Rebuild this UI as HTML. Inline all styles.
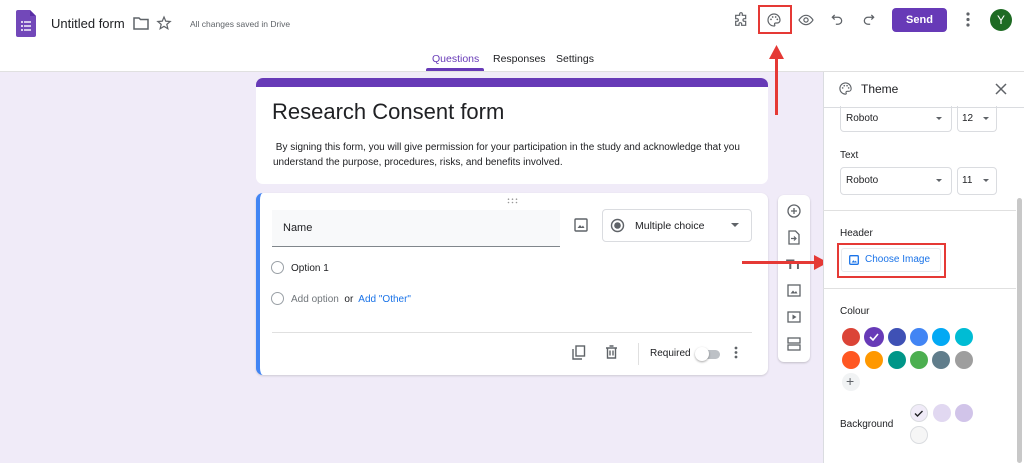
<!DOCTYPE html>
<html><head><meta charset="utf-8"><style>
*{box-sizing:border-box;margin:0;padding:0}
body{width:1024px;height:463px;overflow:hidden;background:#f0ebf8;font-family:"Liberation Sans",sans-serif;color:#202124;position:relative}
.a{position:absolute}
svg{display:block}
.t{font-size:11px}
.dot{position:absolute;width:18px;height:18px;border-radius:50%}
</style></head><body>
<div class="a" style="left:0;top:0;width:1024px;height:72px;background:#fff;border-bottom:1px solid #e0e0e0"></div>
<svg class="a" style="left:16px;top:10px" width="20" height="27" viewBox="0 0 20 27"><path d="M2 0h12l6 6v19a2 2 0 0 1-2 2H2a2 2 0 0 1-2-2V2a2 2 0 0 1 2-2z" fill="#7248b9"/><path d="M14 0v6h6z" fill="#5a2ea6"/><g fill="#fff"><circle cx="6" cy="12" r="1"/><circle cx="6" cy="16" r="1"/><circle cx="6" cy="20" r="1"/><rect x="8" y="11.3" width="7" height="1.4"/><rect x="8" y="15.3" width="7" height="1.4"/><rect x="8" y="19.3" width="7" height="1.4"/></g></svg>
<div class="a" style="left:51px;top:16px;font-size:13px;color:#202124">Untitled form</div>
<svg class="a" style="left:133px;top:16px" width="16" height="14" viewBox="0 0 16 14"><path d="M1 2h5l1.5 1.5H15v9.5H1z" fill="none" stroke="#5f6368" stroke-width="1.5"/></svg>
<svg class="a" style="left:156px;top:15px" width="16" height="16" viewBox="0 0 24 24"><path d="M12 3l2.6 6.2 6.7.5-5.1 4.4 1.6 6.5L12 17l-5.8 3.6 1.6-6.5-5.1-4.4 6.7-.5z" fill="none" stroke="#5f6368" stroke-width="1.8"/></svg>
<div class="a" style="left:190px;top:19px;font-size:8.5px;color:#5f6368">All changes saved in Drive</div>
<svg class="a" style="left:733px;top:12px" width="16" height="16" viewBox="0 0 24 24"><path d="M10 3a2 2 0 0 1 4 0v2h5v5h-2a2 2 0 0 0 0 4h2v6h-6v-2a2 2 0 0 0-4 0v2H4v-6h2a2 2 0 0 0 0-4H4V5h6z" fill="none" stroke="#5f6368" stroke-width="1.8"/></svg>
<div class="a" style="left:758px;top:5px;width:34px;height:29px;border:2px solid #e53935"></div>
<svg class="a" style="left:766px;top:12px" width="16" height="16" viewBox="0 0 24 24"><path d="M12 3a9 9 0 0 0 0 18c1.2 0 1.6-1 1-2-.7-1 0-2.5 1.5-2.5H17a4 4 0 0 0 4-4C21 7 17 3 12 3z" fill="none" stroke="#5f6368" stroke-width="1.8"/><circle cx="7.5" cy="11" r="1.3" fill="#5f6368"/><circle cx="10" cy="7.5" r="1.3" fill="#5f6368"/><circle cx="14.5" cy="7.5" r="1.3" fill="#5f6368"/><circle cx="17" cy="11" r="1.3" fill="#5f6368"/></svg>
<svg class="a" style="left:797px;top:12px" width="18" height="16" viewBox="0 0 24 24"><path d="M1.5 12S5.5 5 12 5s10.5 7 10.5 7-4 7-10.5 7S1.5 12 1.5 12z" fill="none" stroke="#5f6368" stroke-width="1.8"/><circle cx="12" cy="12" r="3.2" fill="none" stroke="#5f6368" stroke-width="1.8"/></svg>
<svg class="a" style="left:830px;top:12px" width="14" height="14" viewBox="0 0 24 24"><path d="M8 5L4 9l4 4M4 9h10a6 6 0 0 1 0 12h-4" fill="none" stroke="#5f6368" stroke-width="2.2"/></svg>
<svg class="a" style="left:862px;top:12px" width="14" height="14" viewBox="0 0 24 24"><path d="M16 5l4 4-4 4M20 9H10a6 6 0 0 0 0 12h4" fill="none" stroke="#5f6368" stroke-width="2.2"/></svg>
<div class="a" style="left:892px;top:8px;width:55px;height:24px;background:#673ab7;border-radius:4px;color:#fff;font-size:11px;font-weight:bold;text-align:center;line-height:24px">Send</div>
<svg class="a" style="left:966px;top:12px" width="4" height="15" viewBox="0 0 4 15"><circle cx="2" cy="2" r="1.6" fill="#5f6368"/><circle cx="2" cy="7.5" r="1.6" fill="#5f6368"/><circle cx="2" cy="13" r="1.6" fill="#5f6368"/></svg>
<div class="a" style="left:990px;top:9px;width:22px;height:22px;border-radius:50%;background:#1e6b23;color:#fff;font-size:12px;text-align:center;line-height:22px">Y</div>
<div class="a" style="left:775px;top:55px;width:3px;height:60px;background:#e53935"></div>
<svg class="a" style="left:769px;top:45px" width="15" height="14" viewBox="0 0 15 14"><path d="M7.5 0L15 14H0z" fill="#e53935"/></svg>
<div class="a t" style="left:432px;top:53px;color:#673ab7;font-size:10.5px">Questions</div>
<div class="a" style="left:426px;top:68px;width:58px;height:3px;background:#673ab7;border-radius:2px 2px 0 0"></div>
<div class="a t" style="left:493px;top:53px;color:#202124;font-size:10.5px">Responses</div>
<div class="a t" style="left:556px;top:53px;color:#202124;font-size:10.5px">Settings</div>
<div class="a" style="left:256px;top:78px;width:512px;height:106px;background:#fff;border-radius:7px;overflow:hidden"><div style="height:9px;background:#673ab7"></div></div>
<div class="a" style="left:272px;top:99px;font-size:22px;color:#202124">Research Consent form</div>
<div class="a" style="left:273px;top:140px;font-size:10px;line-height:15px;color:#202124;width:480px">&nbsp;By signing this form, you will give permission for your participation in the study and acknowledge that you understand the purpose, procedures, risks, and benefits involved.</div>
<div class="a" style="left:256px;top:193px;width:512px;height:182px;background:#fff;border-radius:7px;border-left:4px solid #4285f4;box-shadow:0 1px 2px rgba(0,0,0,.15)"></div>
<svg class="a" style="left:507px;top:198px" width="11" height="6" viewBox="0 0 11 6"><g fill="#999"><circle cx="1.5" cy="1.2" r=".8"/><circle cx="5.5" cy="1.2" r=".8"/><circle cx="9.5" cy="1.2" r=".8"/><circle cx="1.5" cy="4.5" r=".8"/><circle cx="5.5" cy="4.5" r=".8"/><circle cx="9.5" cy="4.5" r=".8"/></g></svg>
<div class="a" style="left:272px;top:210px;width:288px;height:37px;background:#f8f9fa;border-bottom:1px solid #80868b"></div>
<div class="a" style="left:283px;top:222px;font-size:11px">Name</div>
<svg class="a" style="left:574px;top:218px" width="14" height="14" viewBox="0 0 14 14"><rect x="1" y="1" width="12" height="12" rx="1" fill="none" stroke="#5f6368" stroke-width="1.4"/><path d="M3.5 10l2.5-3 1.7 2 1.3-1.5 1.5 2.5z" fill="#5f6368"/></svg>
<div class="a" style="left:602px;top:209px;width:150px;height:33px;border:1px solid #dadce0;border-radius:4px"></div>
<svg class="a" style="left:610px;top:218px" width="15" height="15" viewBox="0 0 15 15"><circle cx="7.5" cy="7.5" r="6" fill="none" stroke="#5f6368" stroke-width="1.4"/><circle cx="7.5" cy="7.5" r="3.3" fill="#5f6368"/></svg>
<div class="a" style="left:635px;top:220px;font-size:10.5px">Multiple choice</div>
<svg class="a" style="left:731px;top:223px" width="8" height="4" viewBox="0 0 8 4"><path d="M0 0h8L4 4z" fill="#5f6368"/></svg>
<div class="a" style="left:271px;top:261px;width:13px;height:13px;border:1.5px solid #9aa0a6;border-radius:50%"></div>
<div class="a" style="left:291px;top:263px;font-size:10px">Option 1</div>
<div class="a" style="left:271px;top:292px;width:13px;height:13px;border:1.5px solid #9aa0a6;border-radius:50%"></div>
<div class="a" style="left:291px;top:294px;font-size:10px;color:#70757a">Add option <span style="color:#202124">&nbsp;or&nbsp;</span> <span style="color:#1a73e8">Add "Other"</span></div>
<div class="a" style="left:272px;top:332px;width:480px;height:1px;background:#e0e0e0"></div>
<svg class="a" style="left:572px;top:345px" width="14" height="15" viewBox="0 0 14 15"><path d="M1 4v10h9" fill="none" stroke="#5f6368" stroke-width="1.4"/><rect x="4" y="1" width="8.5" height="10" fill="none" stroke="#5f6368" stroke-width="1.4"/></svg>
<svg class="a" style="left:605px;top:345px" width="13" height="14" viewBox="0 0 13 14"><path d="M1 3h11M4.5 1h4M2.5 3v10h8V3M5 5.5v5M8 5.5v5" fill="none" stroke="#5f6368" stroke-width="1.4"/></svg>
<div class="a" style="left:638px;top:343px;width:1px;height:22px;background:#e0e0e0"></div>
<div class="a" style="left:650px;top:348px;font-size:10px">Required</div>
<div class="a" style="left:698px;top:350px;width:22px;height:9px;border-radius:5px;background:#bdc1c6"></div>
<div class="a" style="left:695px;top:347px;width:14px;height:14px;border-radius:50%;background:#fff;box-shadow:0 1px 2px rgba(0,0,0,.35)"></div>
<svg class="a" style="left:734px;top:346px" width="4" height="13" viewBox="0 0 4 13"><circle cx="2" cy="2" r="1.4" fill="#5f6368"/><circle cx="2" cy="6.5" r="1.4" fill="#5f6368"/><circle cx="2" cy="11" r="1.4" fill="#5f6368"/></svg>
<div class="a" style="left:778px;top:195px;width:32px;height:167px;background:#fff;border-radius:6px;box-shadow:0 1px 2px rgba(0,0,0,.2)"></div>
<svg class="a" style="left:787px;top:204px" width="14" height="14" viewBox="0 0 14 14"><circle cx="7" cy="7" r="6" fill="none" stroke="#5f6368" stroke-width="1.3"/><path d="M7 4v6M4 7h6" stroke="#5f6368" stroke-width="1.3"/></svg>
<svg class="a" style="left:788px;top:230px" width="12" height="15" viewBox="0 0 12 15"><path d="M1 1h6.5L11 4.5V14H1z" fill="none" stroke="#5f6368" stroke-width="1.3"/><path d="M3 8.5h5M6 6.5l2 2-2 2" fill="none" stroke="#5f6368" stroke-width="1.2"/></svg>
<div class="a" style="left:786px;top:256px;font-size:14px;color:#5f6368;font-weight:bold">Tт</div>
<svg class="a" style="left:787px;top:284px" width="14" height="13" viewBox="0 0 14 13"><rect x="1" y="1" width="12" height="11" fill="none" stroke="#5f6368" stroke-width="1.3"/><path d="M3.5 9.5l2.5-3 1.7 2 1.3-1.5 1.5 2.5z" fill="#5f6368"/></svg>
<svg class="a" style="left:787px;top:311px" width="14" height="12" viewBox="0 0 14 12"><rect x="1" y="1" width="12" height="10" fill="none" stroke="#5f6368" stroke-width="1.3"/><path d="M5.5 3.5v5l4-2.5z" fill="#5f6368"/></svg>
<svg class="a" style="left:787px;top:337px" width="14" height="14" viewBox="0 0 14 14"><rect x="1" y="1" width="12" height="5" fill="none" stroke="#5f6368" stroke-width="1.3"/><rect x="1" y="8" width="12" height="5" fill="none" stroke="#5f6368" stroke-width="1.3"/></svg>
<div class="a" style="left:742px;top:261px;width:76px;height:3px;background:#e53935"></div>
<svg class="a" style="left:814px;top:255px" width="14" height="15" viewBox="0 0 14 15"><path d="M14 7.5L0 15V0z" fill="#e53935"/></svg>
<div class="a" style="left:823px;top:72px;width:201px;height:391px;background:#fff;border-left:1px solid #dadce0"></div>
<div class="a" style="left:823px;top:107px;width:201px;height:1px;background:#dadce0"></div>
<svg class="a" style="left:838px;top:81px" width="15" height="15" viewBox="0 0 24 24"><path d="M12 3a9 9 0 0 0 0 18c1.2 0 1.6-1 1-2-.7-1 0-2.5 1.5-2.5H17a4 4 0 0 0 4-4C21 7 17 3 12 3z" fill="none" stroke="#5f6368" stroke-width="1.8"/><circle cx="7.5" cy="11" r="1.3" fill="#5f6368"/><circle cx="10" cy="7.5" r="1.3" fill="#5f6368"/><circle cx="14.5" cy="7.5" r="1.3" fill="#5f6368"/><circle cx="17" cy="11" r="1.3" fill="#5f6368"/></svg>
<div class="a" style="left:861px;top:82px;font-size:12px">Theme</div>
<svg class="a" style="left:995px;top:83px" width="12" height="12" viewBox="0 0 12 12"><path d="M1 1l10 10M11 1L1 11" stroke="#5f6368" stroke-width="1.5"/></svg>
<div class="a" style="left:840px;top:106px;width:112px;height:26px;border:1px solid #dadce0;border-top:none;border-radius:0 0 4px 4px"></div>
<div class="a" style="left:846px;top:113px;font-size:10px">Roboto</div>
<svg class="a" style="left:936px;top:117px" width="6" height="3" viewBox="0 0 6 3"><path d="M0 0h6L3 3z" fill="#5f6368"/></svg>
<div class="a" style="left:957px;top:106px;width:40px;height:26px;border:1px solid #dadce0;border-top:none;border-radius:0 0 4px 4px"></div>
<div class="a" style="left:962px;top:113px;font-size:10px">12</div>
<svg class="a" style="left:983px;top:117px" width="6" height="3" viewBox="0 0 6 3"><path d="M0 0h6L3 3z" fill="#5f6368"/></svg>
<div class="a" style="left:840px;top:150px;font-size:10px">Text</div>
<div class="a" style="left:840px;top:167px;width:112px;height:28px;border:1px solid #dadce0;border-radius:4px"></div>
<div class="a" style="left:846px;top:175px;font-size:10px">Roboto</div>
<svg class="a" style="left:936px;top:179px" width="6" height="3" viewBox="0 0 6 3"><path d="M0 0h6L3 3z" fill="#5f6368"/></svg>
<div class="a" style="left:957px;top:167px;width:40px;height:28px;border:1px solid #dadce0;border-radius:4px"></div>
<div class="a" style="left:962px;top:175px;font-size:10px">11</div>
<svg class="a" style="left:983px;top:179px" width="6" height="3" viewBox="0 0 6 3"><path d="M0 0h6L3 3z" fill="#5f6368"/></svg>
<div class="a" style="left:823px;top:210px;width:193px;height:1px;background:#e0e0e0"></div>
<div class="a" style="left:1017px;top:198px;width:5px;height:265px;background:#c8c8c8;border-radius:3px"></div>
<div class="a" style="left:840px;top:228px;font-size:10px">Header</div>
<div class="a" style="left:837px;top:243px;width:109px;height:35px;border:2px solid #e53935"></div>
<div class="a" style="left:841px;top:248px;width:100px;height:24px;border:1px solid #e8eaed;border-radius:3px"></div>
<svg class="a" style="left:849px;top:255px" width="10" height="10" viewBox="0 0 10 10"><rect x=".7" y=".7" width="8.6" height="8.6" rx="1" fill="none" stroke="#1a73e8" stroke-width="1.3"/><path d="M2.5 7.5l2-2.3 1.3 1.5 1-1.1 1 1.9z" fill="#1a73e8"/></svg>
<div class="a" style="left:865px;top:254px;font-size:10px;color:#1a73e8">Choose Image</div>
<div class="a" style="left:823px;top:288px;width:193px;height:1px;background:#e0e0e0"></div>
<div class="a" style="left:840px;top:306px;font-size:10px">Colour</div>
<div class="dot" style="left:842px;top:328px;background:#db4437"></div>
<div class="dot" style="left:864px;top:327px;width:20px;height:20px;background:#673ab7"></div>
<svg class="a" style="left:869px;top:333px" width="10" height="8" viewBox="0 0 10 8"><path d="M1 4l3 3 5-6" fill="none" stroke="#fff" stroke-width="1.6"/></svg>
<div class="dot" style="left:888px;top:328px;background:#3f51b5"></div>
<div class="dot" style="left:910px;top:328px;background:#4285f4"></div>
<div class="dot" style="left:932px;top:328px;background:#03a9f4"></div>
<div class="dot" style="left:955px;top:328px;background:#00bcd4"></div>
<div class="dot" style="left:842px;top:351px;background:#ff5722"></div>
<div class="dot" style="left:865px;top:351px;background:#ff9800"></div>
<div class="dot" style="left:888px;top:351px;background:#009688"></div>
<div class="dot" style="left:910px;top:351px;background:#4caf50"></div>
<div class="dot" style="left:932px;top:351px;background:#607d8b"></div>
<div class="dot" style="left:955px;top:351px;background:#9e9e9e"></div>
<div class="dot" style="left:842px;top:373px;background:#f1f3f4"></div>
<div class="a" style="left:846px;top:373px;font-size:14px;color:#5f6368">+</div>
<div class="a" style="left:840px;top:419px;font-size:10px">Background</div>
<div class="dot" style="left:910px;top:404px;background:#f0ebf8;border:1px solid #dadce0"></div>
<svg class="a" style="left:914px;top:410px" width="10" height="7" viewBox="0 0 10 7"><path d="M1 3.5l2.5 2.5 5-5" fill="none" stroke="#202124" stroke-width="1.4"/></svg>
<div class="dot" style="left:933px;top:404px;background:#e1d8f1"></div>
<div class="dot" style="left:955px;top:404px;background:#d1c4e9"></div>
<div class="dot" style="left:910px;top:426px;background:#f6f6f6;border:1px solid #dadce0"></div>
</body></html>
